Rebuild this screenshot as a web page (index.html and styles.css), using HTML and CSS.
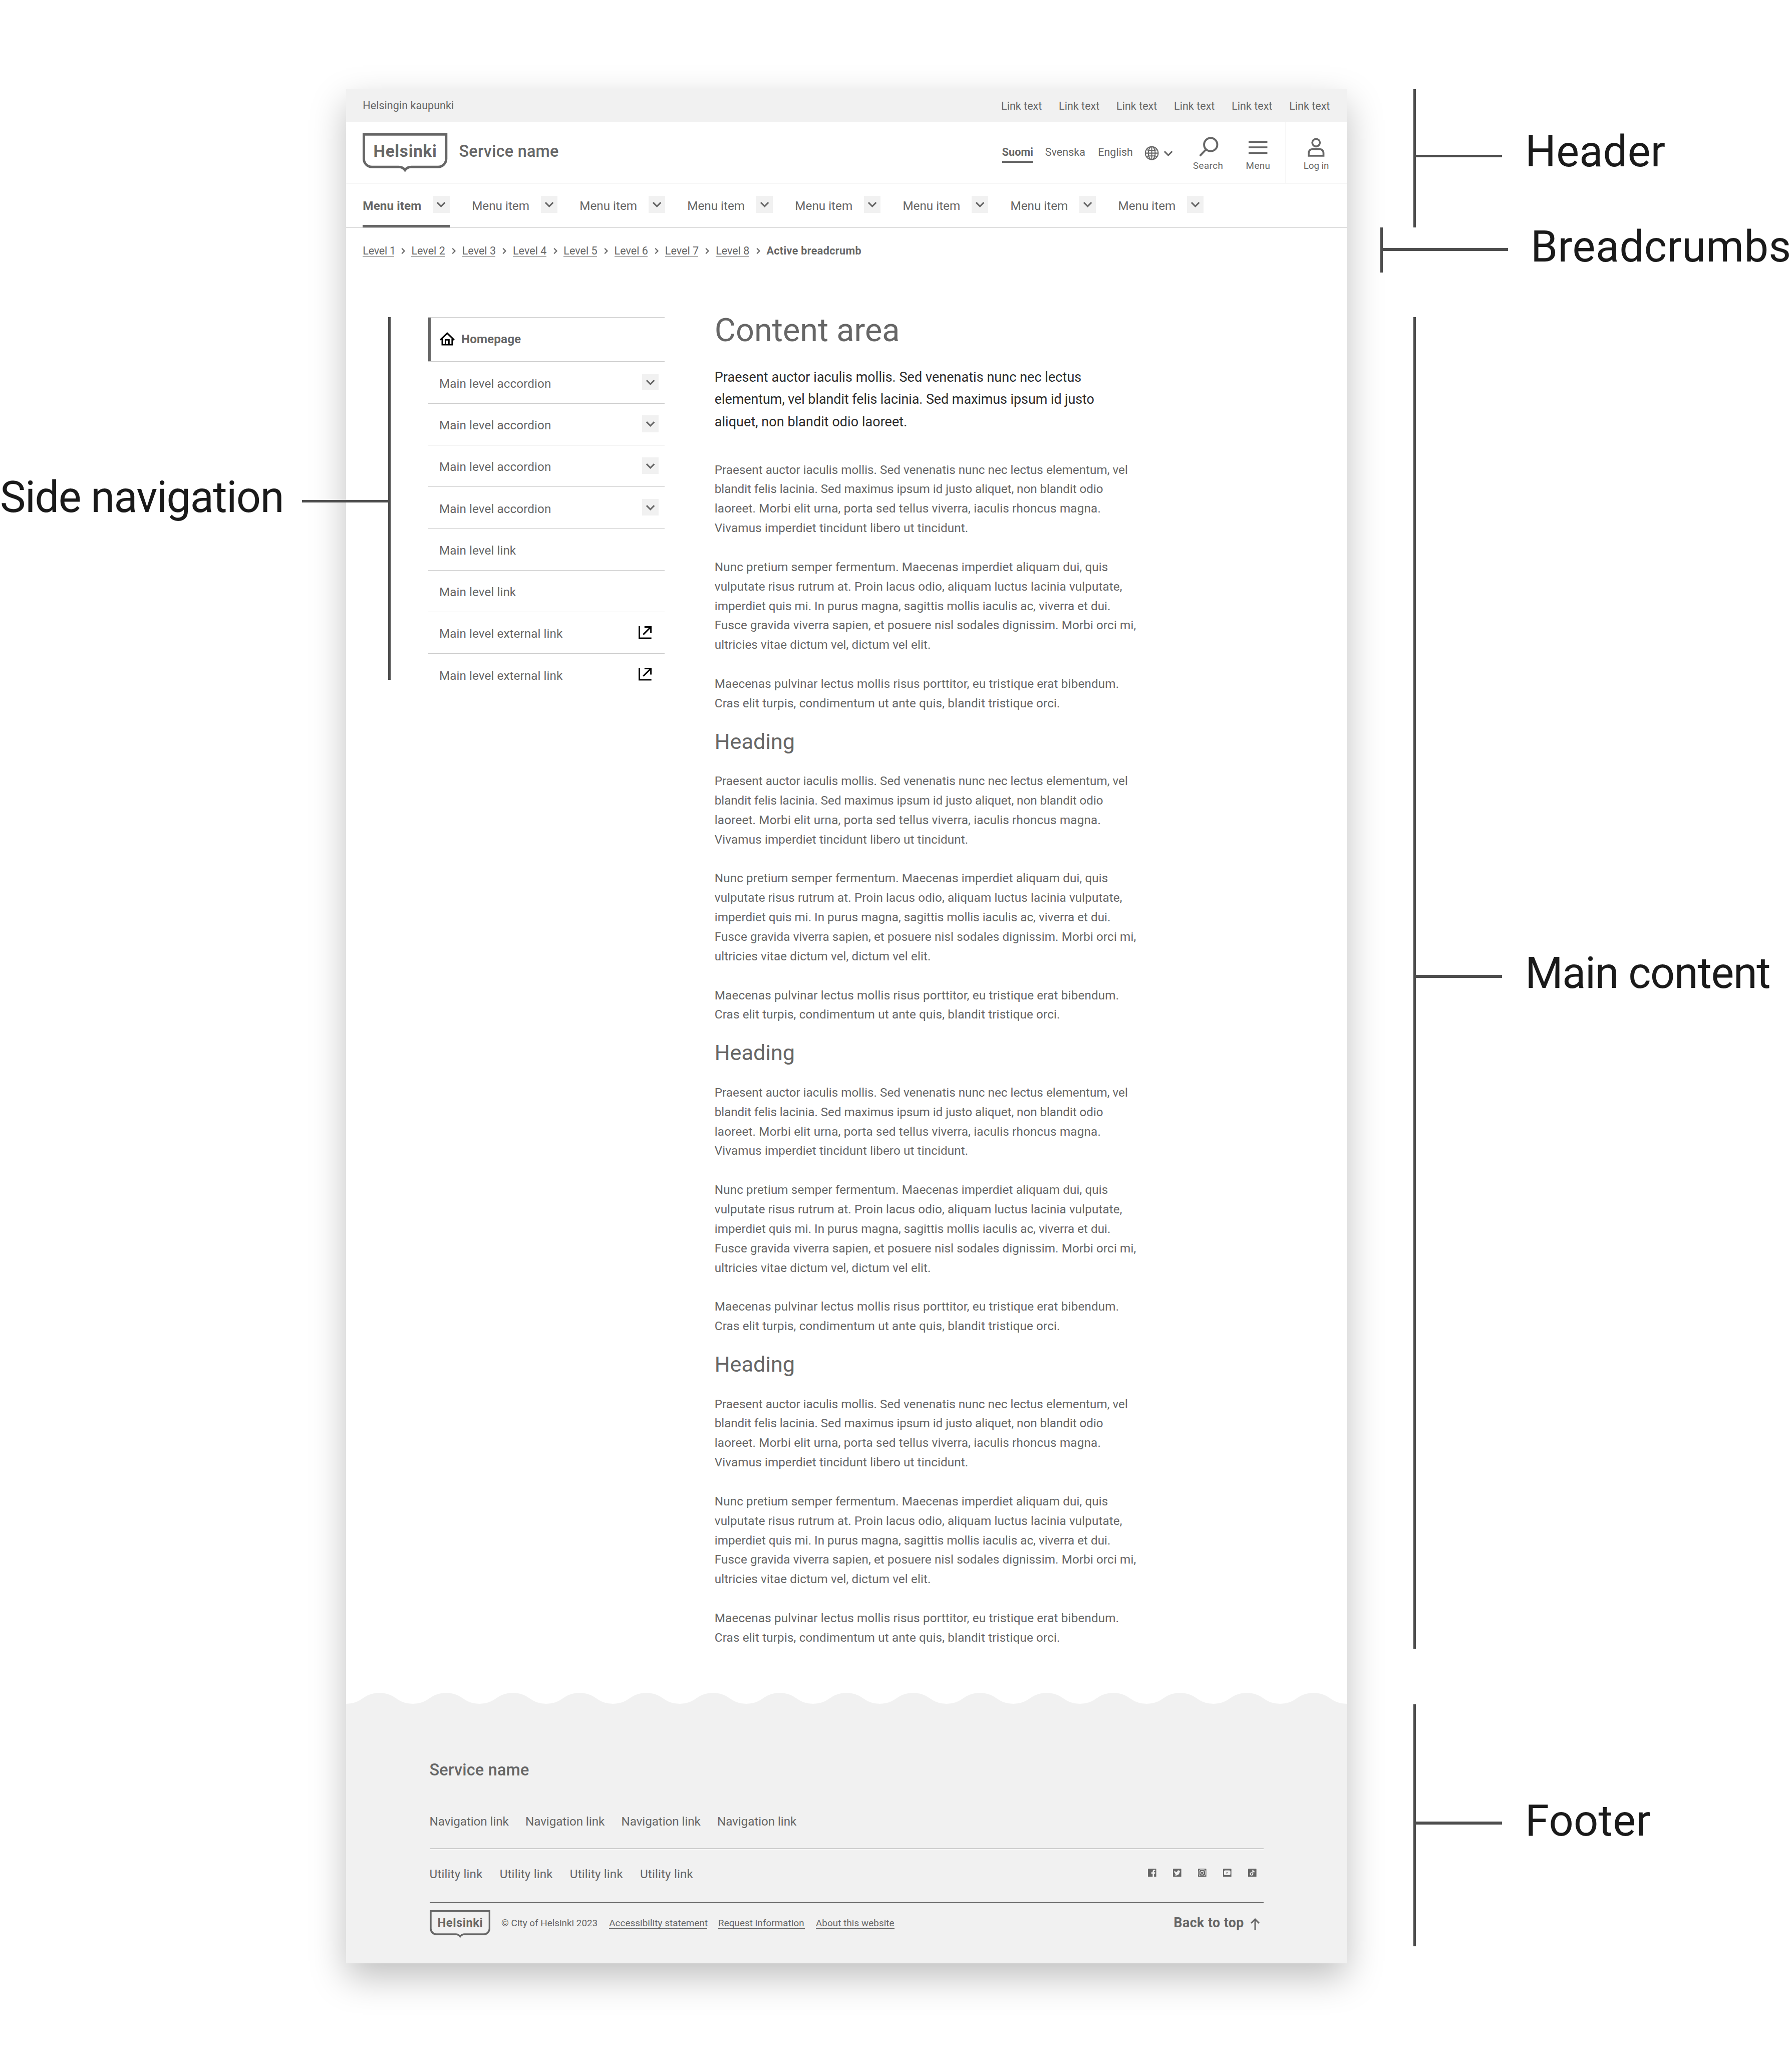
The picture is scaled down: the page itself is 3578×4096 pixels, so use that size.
FILE: index.html
```html
<!DOCTYPE html>
<html lang="en">
<head>
<meta charset="utf-8">
<title>Page structure</title>
<link rel="stylesheet" href="styles.css">
</head>
<body>
<svg class="sprite" aria-hidden="true">
  <symbol id="chevron" viewBox="0 0 48 48"><path d="M12.9 18.9L24 30L35.1 18.9" fill="none" stroke="currentColor" stroke-width="4.4"/></symbol>
  <symbol id="crumb" viewBox="0 0 50 42"><path d="M22 17L29.500 24.500L22 32" fill="none" stroke="currentColor" stroke-width="3.2"/></symbol>
  <symbol id="external" viewBox="0 0 38 37"><path d="M2 0V34.500H37M17 2.200H35.500V19.500M35 2.500L13.500 24" fill="none" stroke="currentColor" stroke-width="4.200"/></symbol>
</svg>

<div class="board">
  <div class="gutter"></div>

  <div class="page">
    <header>
      <div class="topbar">
        <span class="city">Helsingin kaupunki</span>
        <nav class="toplinks"><a>Link text</a><a>Link text</a><a>Link text</a><a>Link text</a><a>Link text</a><a>Link text</a></nav>
      </div>
      <div class="brandbar">
        <svg class="logo" viewBox="0 0 244 112">
          <path d="M3.500 3.500H240.500V73.500A23.500 23.500 0 0 1 217 97H140C132 97 126 100.500 122 106C118 100.500 112 97 104 97H27A23.500 23.500 0 0 1 3.500 73.500Z" fill="none" stroke="currentColor" stroke-width="7"/>
          <text x="31" y="67.300" textLength="182" class="logo-text">Helsinki</text>
        </svg>
        <span class="service">Service name</span>
        <div class="languages">
          <a class="lang lang-fi">Suomi</a><a class="lang lang-sv">Svenska</a><a class="lang lang-en">English</a>
        </div>
        <div class="lang-more">
          <svg class="i48" viewBox="0 0 48 48" fill="none" stroke="currentColor" stroke-width="3"><circle cx="24" cy="24" r="18.500"/><ellipse cx="24" cy="24" rx="10" ry="18.500"/><path d="M24 5V43M5 24H43M8 14.500Q24 18 40 14.500M8 33.500Q24 30 40 33.500"/></svg>
          <svg class="i48"><use href="#chevron"/></svg>
        </div>
        <div class="action action-search">
          <svg viewBox="0 0 80 68" fill="none" stroke="currentColor" stroke-width="5.600"><circle cx="48" cy="24" r="19"/><path d="M17 56.500L35 37.500"/></svg>
          <span>Search</span>
        </div>
        <div class="action action-menu">
          <svg viewBox="0 0 80 68" fill="none" stroke="currentColor" stroke-width="5.400"><path d="M13 16H67M13 32H67M13 48H67"/></svg>
          <span>Menu</span>
        </div>
        <div class="login">
          <div class="action action-login">
            <svg viewBox="0 0 80 68" fill="none" stroke="currentColor" stroke-width="5.400"><circle cx="40" cy="18.500" r="10.900"/><path d="M18.700 56V48a11 11 0 0 1 11-11h20.600a11 11 0 0 1 11 11V56Z"/></svg>
            <span>Log in</span>
          </div>
        </div>
      </div>
      <nav class="menu">
        <div class="menu-item is-active"><a>Menu item</a><svg class="i48 toggle"><use href="#chevron"/></svg></div>
        <div class="menu-item"><a>Menu item</a><svg class="i48 toggle"><use href="#chevron"/></svg></div>
        <div class="menu-item"><a>Menu item</a><svg class="i48 toggle"><use href="#chevron"/></svg></div>
        <div class="menu-item"><a>Menu item</a><svg class="i48 toggle"><use href="#chevron"/></svg></div>
        <div class="menu-item"><a>Menu item</a><svg class="i48 toggle"><use href="#chevron"/></svg></div>
        <div class="menu-item"><a>Menu item</a><svg class="i48 toggle"><use href="#chevron"/></svg></div>
        <div class="menu-item"><a>Menu item</a><svg class="i48 toggle"><use href="#chevron"/></svg></div>
        <div class="menu-item"><a>Menu item</a><svg class="i48 toggle"><use href="#chevron"/></svg></div>
      </nav>
    </header>

    <nav class="crumbs">
      <a class="narrow">Level 1</a><svg><use href="#crumb"/></svg>
      <a>Level 2</a><svg><use href="#crumb"/></svg>
      <a>Level 3</a><svg><use href="#crumb"/></svg>
      <a>Level 4</a><svg><use href="#crumb"/></svg>
      <a>Level 5</a><svg><use href="#crumb"/></svg>
      <a>Level 6</a><svg><use href="#crumb"/></svg>
      <a>Level 7</a><svg><use href="#crumb"/></svg>
      <a>Level 8</a><svg><use href="#crumb"/></svg>
      <strong>Active breadcrumb</strong>
    </nav>

    <main>
      <nav class="sidenav">
        <div class="side-row side-home">
          <svg class="home" viewBox="0 0 44 40" fill="none" stroke="currentColor" stroke-width="4.200"><path d="M1.500 22.500L21.500 3L41.500 22.500M7.200 19V36.200H35.800V19M16.500 36V22.200H26.500V36"/></svg>
          <span>Homepage</span>
        </div>
        <div class="side-row"><span>Main level accordion</span><svg class="i48 toggle"><use href="#chevron"/></svg></div>
        <div class="side-row"><span>Main level accordion</span><svg class="i48 toggle"><use href="#chevron"/></svg></div>
        <div class="side-row"><span>Main level accordion</span><svg class="i48 toggle"><use href="#chevron"/></svg></div>
        <div class="side-row"><span>Main level accordion</span><svg class="i48 toggle"><use href="#chevron"/></svg></div>
        <div class="side-row"><span>Main level link</span></div>
        <div class="side-row"><span>Main level link</span></div>
        <div class="side-row"><span>Main level external link</span><svg class="ext"><use href="#external"/></svg></div>
        <div class="side-row"><span>Main level external link</span><svg class="ext"><use href="#external"/></svg></div>
      </nav>

      <article class="content">
        <h1>Content area</h1>
        <p class="lead"><span class="airy">Praesent auctor iaculis mollis. Sed venenatis nunc nec lectus</span><br>elementum, vel blandit felis lacinia. Sed maximus ipsum id justo<br><span class="airy">aliquet, non blandit odio laoreet.</span></p>
        <section>
          <p><span class="snug">Praesent auctor iaculis mollis. Sed venenatis nunc nec lectus elementum, vel</span><br><span class="tight">blandit felis lacinia. Sed maximus ipsum id justo aliquet, non blandit odio</span><br><span class="loose">laoreet. Morbi elit urna, porta sed tellus viverra, iaculis rhoncus magna.</span><br>Vivamus imperdiet tincidunt libero ut tincidunt.</p>
          <p>Nunc pretium semper fermentum. Maecenas imperdiet aliquam dui, quis<br>vulputate risus rutrum at. Proin lacus odio, aliquam luctus lacinia vulputate,<br><span class="snug">imperdiet quis mi. In purus magna, sagittis mollis iaculis ac, viverra et dui.</span><br>Fusce gravida viverra sapien, et posuere nisl sodales dignissim. Morbi orci mi,<br>ultricies vitae dictum vel, dictum vel elit.</p>
          <p class="wide">Maecenas pulvinar lectus mollis risus porttitor, eu tristique erat bibendum.<br>Cras elit turpis, condimentum ut ante quis, blandit tristique orci.</p>
        </section>
        <section>
          <h2>Heading</h2>
          <p><span class="snug">Praesent auctor iaculis mollis. Sed venenatis nunc nec lectus elementum, vel</span><br><span class="tight">blandit felis lacinia. Sed maximus ipsum id justo aliquet, non blandit odio</span><br><span class="loose">laoreet. Morbi elit urna, porta sed tellus viverra, iaculis rhoncus magna.</span><br>Vivamus imperdiet tincidunt libero ut tincidunt.</p>
          <p>Nunc pretium semper fermentum. Maecenas imperdiet aliquam dui, quis<br>vulputate risus rutrum at. Proin lacus odio, aliquam luctus lacinia vulputate,<br><span class="snug">imperdiet quis mi. In purus magna, sagittis mollis iaculis ac, viverra et dui.</span><br>Fusce gravida viverra sapien, et posuere nisl sodales dignissim. Morbi orci mi,<br>ultricies vitae dictum vel, dictum vel elit.</p>
          <p class="wide">Maecenas pulvinar lectus mollis risus porttitor, eu tristique erat bibendum.<br>Cras elit turpis, condimentum ut ante quis, blandit tristique orci.</p>
        </section>
        <section>
          <h2>Heading</h2>
          <p><span class="snug">Praesent auctor iaculis mollis. Sed venenatis nunc nec lectus elementum, vel</span><br><span class="tight">blandit felis lacinia. Sed maximus ipsum id justo aliquet, non blandit odio</span><br><span class="loose">laoreet. Morbi elit urna, porta sed tellus viverra, iaculis rhoncus magna.</span><br>Vivamus imperdiet tincidunt libero ut tincidunt.</p>
          <p>Nunc pretium semper fermentum. Maecenas imperdiet aliquam dui, quis<br>vulputate risus rutrum at. Proin lacus odio, aliquam luctus lacinia vulputate,<br><span class="snug">imperdiet quis mi. In purus magna, sagittis mollis iaculis ac, viverra et dui.</span><br>Fusce gravida viverra sapien, et posuere nisl sodales dignissim. Morbi orci mi,<br>ultricies vitae dictum vel, dictum vel elit.</p>
          <p class="wide">Maecenas pulvinar lectus mollis risus porttitor, eu tristique erat bibendum.<br>Cras elit turpis, condimentum ut ante quis, blandit tristique orci.</p>
        </section>
        <section>
          <h2>Heading</h2>
          <p><span class="snug">Praesent auctor iaculis mollis. Sed venenatis nunc nec lectus elementum, vel</span><br><span class="tight">blandit felis lacinia. Sed maximus ipsum id justo aliquet, non blandit odio</span><br><span class="loose">laoreet. Morbi elit urna, porta sed tellus viverra, iaculis rhoncus magna.</span><br>Vivamus imperdiet tincidunt libero ut tincidunt.</p>
          <p>Nunc pretium semper fermentum. Maecenas imperdiet aliquam dui, quis<br>vulputate risus rutrum at. Proin lacus odio, aliquam luctus lacinia vulputate,<br><span class="snug">imperdiet quis mi. In purus magna, sagittis mollis iaculis ac, viverra et dui.</span><br>Fusce gravida viverra sapien, et posuere nisl sodales dignissim. Morbi orci mi,<br>ultricies vitae dictum vel, dictum vel elit.</p>
          <p class="wide">Maecenas pulvinar lectus mollis risus porttitor, eu tristique erat bibendum.<br>Cras elit turpis, condimentum ut ante quis, blandit tristique orci.</p>
        </section>
      </article>
    </main>

    <footer>
      <svg class="wave" viewBox="0 0 2880 33" preserveAspectRatio="none">
        <defs><pattern id="koro" width="192" height="33" patternUnits="userSpaceOnUse"><path d="M0 31.500C49 31.500 47 .5 96 .5S143 31.500 192 31.500V33H0Z" fill="#f1f1f1"/></pattern></defs>
        <rect width="2880" height="33" fill="url(#koro)"/>
      </svg>
      <div class="footer-body">
        <div class="footer-title">Service name</div>
        <nav class="footer-nav"><a>Navigation link</a><a>Navigation link</a><a>Navigation link</a><a>Navigation link</a></nav>
        <div class="footer-utility">
          <nav class="utility"><a>Utility link</a><a>Utility link</a><a>Utility link</a><a>Utility link</a></nav>
          <div class="social">
            <svg viewBox="0 0 24 24"><rect width="24" height="24" rx="2"/><path class="cut" d="M21 3.400h-2.700c-3 0-4.700 1.600-4.700 4.600v2.500H10v3.800h3.600V24h4v-9.700h3l.5-3.800h-3.500V8.400c0-1 .5-1.500 1.500-1.500H21z"/></svg>
            <svg viewBox="0 0 24 24"><rect width="24" height="24" rx="2"/><path class="cut" transform="translate(3 3.200) scale(.76)" d="M23.950 4.570a10 10 0 0 1-2.820.780 4.960 4.960 0 0 0 2.160-2.720c-.950.550-2 .950-3.130 1.180a4.920 4.920 0 0 0-8.380 4.480C7.690 8.090 4.070 6.130 1.640 3.160a4.820 4.820 0 0 0-.670 2.480c0 1.710.870 3.210 2.190 4.100a4.900 4.900 0 0 1-2.230-.620v.060a4.920 4.920 0 0 0 3.950 4.830 5 5 0 0 1-2.210.080 4.940 4.940 0 0 0 4.600 3.420A9.870 9.870 0 0 1 0 19.540a13.990 13.990 0 0 0 7.550 2.210c9.050 0 14-7.500 14-13.980 0-.210 0-.420-.020-.630a9.940 9.940 0 0 0 2.460-2.550z"/></svg>
            <svg viewBox="0 0 24 24"><rect width="24" height="24" rx="2"/><g class="cut-line"><rect x="3" y="3" width="18" height="18" rx="5"/><circle cx="12" cy="12" r="4.300"/></g><circle class="cut" cx="17" cy="7" r="1.200"/></svg>
            <svg viewBox="0 0 24 24"><rect width="24" height="24" rx="2"/><rect class="cut" x="2.700" y="5.200" width="18.600" height="13.400" rx="3.200"/><path d="M10 9.200L15 12L10 14.800Z"/></svg>
            <svg viewBox="0 0 24 24"><rect width="24" height="24" rx="2"/><path class="cut" d="M12.200 4h2.700c.2 2.200 1.700 3.700 4 3.900v2.700c-1.500 0-2.900-.5-4-1.300v5.700c0 6.600-9.900 6.600-9.900.2 0-3 2.400-5.200 5.500-5v2.800c-1.600-.2-2.800.8-2.800 2.200 0 3 4.500 2.900 4.500-.4z"/></svg>
          </div>
        </div>
        <div class="footer-base">
          <svg class="logo logo-small" viewBox="0 0 244 112">
            <path d="M3.500 3.500H240.500V73.500A23.500 23.500 0 0 1 217 97H140C132 97 126 100.500 122 106C118 100.500 112 97 104 97H27A23.500 23.500 0 0 1 3.500 73.500Z" fill="none" stroke="currentColor" stroke-width="7"/>
            <text x="31" y="67.300" textLength="182" class="logo-text">Helsinki</text>
          </svg>
          <span class="copyright">© City of Helsinki 2023</span>
          <a class="base-access">Accessibility statement</a>
          <a class="base-request">Request information</a>
          <a class="base-about">About this website</a>
          <div class="top">
            <span>Back to top</span>
            <svg viewBox="0 0 26 33" fill="none" stroke="currentColor" stroke-width="4.200"><path d="M13 33V3M1.600 14.200L13 2.800L24.400 14.200"/></svg>
          </div>
        </div>
      </div>
    </footer>
  </div>

  <aside class="notes">
    <div class="note note-header"><i class="stem"></i><span class="label">Header</span></div>
    <div class="note note-crumbs"><i class="stem"></i><span class="label">Breadcrumbs</span></div>
    <div class="note note-main"><i class="stem"></i><span class="label">Main content</span></div>
    <div class="note note-footer"><i class="stem"></i><span class="label">Footer</span></div>
  </aside>

  <aside class="note-side"><span class="label">Side navigation</span><i class="stem"></i></aside>
</div>
</body>
</html>
```
FILE: styles.css
```css
/* 1rem is one hundred design units, so every length below is units / 100. */
html { font-size: 69.38px; }
* { box-sizing: border-box; }

body {
  margin: 0;
  background: #fff;
  color: #666;
  font-family: Roboto, "Liberation Sans", sans-serif;
  font-size: .35rem;
  line-height: .48rem;
  overflow: hidden;
}
a { color: inherit; white-space: nowrap; }
svg { display: block; flex: none; }
span, strong { white-space: nowrap; }
.sprite { position: absolute; width: 0; height: 0; }
.i48 { width: .48rem; height: .48rem; }
.toggle { background: #f1f1f1; }

.board { position: relative; display: flex; align-items: flex-start; width: 3578px; height: 4096px; overflow: hidden; }
.gutter { flex: none; width: 9.96rem; }

.page {
  flex: none;
  display: flex;
  flex-direction: column;
  width: 28.8rem;
  height: 53.92rem;
  margin-top: 2.56rem;
  background: #fff;
  box-shadow: 0 .4rem .96rem rgba(0, 0, 0, .25);
}

/* Header */
.topbar { display: flex; justify-content: space-between; height: .96rem; padding: .235rem .48rem 0; background: #f1f1f1; font-size: .311rem; }
.city { letter-spacing: .001em; }
.toplinks { display: flex; gap: .48rem; padding-top: .015rem; }
.toplinks a { width: 1.178rem; }

.brandbar { display: flex; align-items: flex-start; height: 1.76rem; padding: 0 .48rem; border-bottom: .02rem solid #ccc; }
.logo { width: 2.44rem; height: 1.12rem; margin-top: .32rem; }
.logo-text { font-size: 48px; font-weight: 700; fill: currentColor; }
.service { margin: .52rem 0 0 .33rem; font-size: .467rem; line-height: .64rem; font-weight: 500; letter-spacing: .007em; }
.languages { display: flex; gap: .34rem; margin-left: auto; padding-top: .614rem; font-size: .311rem; }
.lang { height: .55rem; }
.lang-fi { width: .9rem; border-bottom: .06rem solid #666; font-weight: 700; letter-spacing: .005em; }
.lang-sv { width: 1.18rem; }
.lang-en { width: 1.02rem; }
.lang-more { display: flex; margin: .64rem .5rem 0 .29rem; }
.action { display: flex; flex-direction: column; align-items: center; width: .8rem; margin-top: .4rem; font-size: .272rem; line-height: .32rem; letter-spacing: .02em; }
.action svg { width: .8rem; height: .68rem; }
.action span { margin-top: .01rem; }
.action-search { margin-right: .64rem; }
.action-menu { margin-right: .4rem; }
.action-login { letter-spacing: -.005em; }
.login { align-self: stretch; padding-left: .46rem; border-left: .02rem solid #ccc; }

.menu { display: flex; gap: .64rem; height: 1.28rem; padding: 0 .48rem; border-bottom: .02rem solid #ccc; }
.menu-item { display: flex; justify-content: space-between; align-items: flex-start; width: 2.46rem; padding-top: .36rem; }
.menu-item a { margin-top: .04rem; }
.menu-item.is-active { width: 2.5rem; border-bottom: .08rem solid #666; font-weight: 700; letter-spacing: .003em; }

.crumbs { display: flex; align-items: flex-start; height: 1.28rem; padding: .42rem .48rem 0; font-size: .311rem; }
.crumbs a { width: .96rem; height: .42rem; border-bottom: .02rem solid #666; }
.crumbs .narrow { width: .9rem; letter-spacing: -.012em; }
.crumbs svg { width: .5rem; height: .42rem; }
.crumbs strong { letter-spacing: .016em; }

/* Main */
main { display: flex; align-items: flex-start; height: 40.86rem; padding: 1.28rem 0 0 2.36rem; }
.sidenav { width: 6.8rem; border-top: .02rem solid #ccc; }
.side-row { display: flex; align-items: flex-start; justify-content: space-between; height: 1.2rem; padding: .34rem .16rem 0 .32rem; border-bottom: .02rem solid #ccc; }
.side-row span { margin-top: .04rem; letter-spacing: .003em; }
.side-row:last-child { border-bottom: 0; }
.side-home { position: relative; justify-content: flex-start; height: 1.28rem; padding-left: .34rem; font-weight: 700; }
.side-home::before { content: ""; position: absolute; left: 0; top: 0; width: .08rem; height: 1.26rem; background: #666; }
.side-home span { margin-left: .175rem; letter-spacing: .004em; }
.home { width: .44rem; height: .4rem; margin-top: .08rem; color: #000; }
.ext { width: .38rem; height: .37rem; margin: .06rem .2rem 0 0; color: #000; }

.content { margin-left: 1.445rem; white-space: nowrap; }
h1, h2, p { margin: 0; font-weight: 400; }
h1 { margin-top: -.1rem; font-size: .934rem; line-height: .96rem; }
.lead { margin: .557rem 0 .783rem; color: #2b2b2b; font-size: .389rem; line-height: .64rem; letter-spacing: -.003em; }
.lead .airy { letter-spacing: .002em; }
section p { line-height: .56rem; letter-spacing: .004em; }
section p.wide { letter-spacing: .006em; }
.snug { letter-spacing: 0; }
.tight { letter-spacing: -.003em; }
.loose { letter-spacing: .007em; }
p + p { margin-top: .56rem; }
h2 { padding: .417rem 0 .463rem; font-size: .623rem; line-height: .8rem; }

/* Footer */
.wave { width: 28.8rem; height: .33rem; }
.footer-body { height: 7.45rem; padding: 1.57rem 2.4rem 0; background: #f1f1f1; }
.footer-title { font-size: .467rem; line-height: .64rem; font-weight: 500; letter-spacing: .007em; }
.footer-nav { display: flex; gap: .48rem; height: 1.96rem; padding-top: .917rem; border-bottom: .02rem solid #666; }
.footer-nav a { width: 2.28rem; letter-spacing: -.003em; }
.footer-utility { display: flex; justify-content: space-between; height: 1.54rem; padding-top: .48rem; border-bottom: .02rem solid #666; }
.utility { display: flex; gap: .48rem; }
.utility a { width: 1.54rem; letter-spacing: .006em; }
.social { display: flex; gap: .48rem; padding: .08rem .2rem 0 0; }
.social svg { width: .24rem; height: .24rem; fill: #666; }
.social .cut { fill: #f1f1f1; }
.cut-line { fill: none; stroke: #f1f1f1; stroke-width: 1.6; }
.footer-base { display: flex; align-items: flex-start; gap: .32rem; font-size: .272rem; line-height: .4rem; letter-spacing: .003em; }
.logo-small { width: 1.75rem; height: .8rem; margin-top: .22rem; }
.copyright { width: 2.78rem; margin-top: .397rem; letter-spacing: 0; }
.footer-base a { height: .355rem; margin-top: .397rem; border-bottom: .02rem solid #666; }
.base-access { width: 2.82rem; }
.base-request { width: 2.49rem; }
.base-about { width: 2.27rem; }
.top { display: flex; align-items: flex-start; gap: .19rem; margin: .35rem .11rem 0 auto; font-size: .385rem; line-height: .48rem; font-weight: 700; letter-spacing: .017em; }
.top svg { width: .26rem; height: .33rem; margin-top: .1rem; }

/* Annotations */
.notes { display: flex; flex-direction: column; padding-top: 2.56rem; }
.note { display: flex; align-items: flex-start; margin-left: 1.92rem; border-left: .08rem solid #4d4d4d; }
.stem { flex: none; width: 2.48rem; height: .08rem; background: #4d4d4d; }
.label { color: #1a1a1a; font-size: 1.245rem; line-height: 1.5rem; }
.note .label { margin-left: .66rem; letter-spacing: .004em; }
.note-header { height: 3.98rem; }
.note-header .stem { margin-top: 1.89rem; }
.note-header .label { margin-top: 1.055rem; }
.note-crumbs { height: 1.3rem; margin-left: .96rem; }
.note-crumbs .stem { width: 3.6rem; margin-top: .6rem; }
.note-crumbs .label { margin-top: -.18rem; letter-spacing: .006em; }
.note-main { height: 38.32rem; margin-top: 1.28rem; }
.note-main .stem { margin-top: 18.93rem; }
.note-main .label { margin-top: 18.13rem; letter-spacing: -.015em; }
.note-footer { height: 6.96rem; margin-top: 1.6rem; }
.note-footer .stem { margin-top: 3.37rem; }
.note-footer .label { margin-top: 2.6rem; }

/* The side navigation bracket is drawn over the page. */
.note-side { position: absolute; left: 0; top: 9.12rem; display: flex; align-items: flex-start; justify-content: space-between; width: 11.24rem; height: 10.44rem; border-right: .08rem solid #4d4d4d; }
.note-side .label { margin-top: 4.45rem; letter-spacing: -.016em; }
.note-side .stem { margin-top: 5.26rem; }
```
